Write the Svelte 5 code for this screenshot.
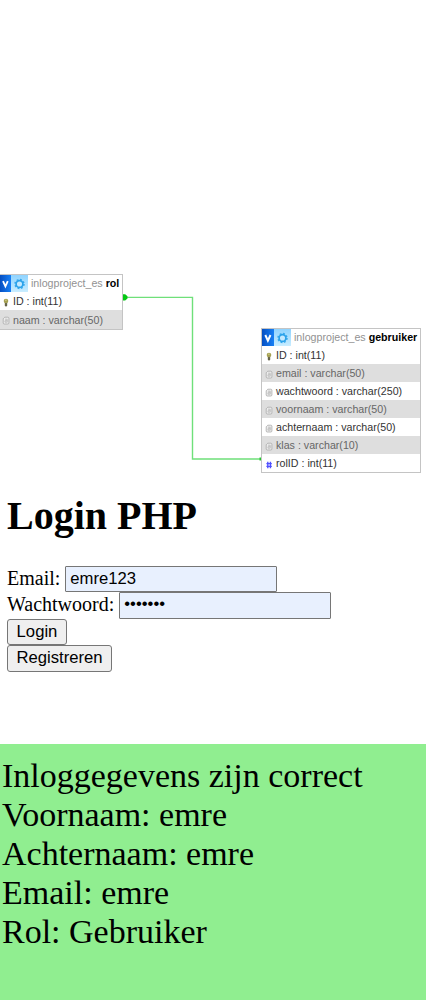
<script>
  const tables = [
    { name: 'rol', cls: 'role', columns: [['key', 'ID : int(11)'], ['text', 'naam : varchar(50)']] },
    {
      name: 'gebruiker', cls: 'user', columns: [
        ['key', 'ID : int(11)'],
        ['text', 'email : varchar(50)'],
        ['text', 'wachtwoord : varchar(250)'],
        ['text', 'voornaam : varchar(50)'],
        ['text', 'achternaam : varchar(50)'],
        ['text', 'klas : varchar(10)'],
        ['num', 'rolID : int(11)']
      ]
    }
  ];
  let email = $state('emre123');
  let password = $state('welkom1');
  const result = ['Inloggegevens zijn correct', 'Voornaam: emre', 'Achternaam: emre', 'Email: emre', 'Rol: Gebruiker'];
</script>

<main>
  <section class="diagram">
    <svg class="relation" width="426" height="486" viewBox="0 0 426 486">
      <path d="M124 297.4H192.5V459H262" fill="none" stroke="#6fe07a" stroke-width="1.4" />
      <path d="M123 294.2h2.2l2.3 2v2.4l-2.3 2H123z" fill="#05c814" />
      <path d="M259.5 459h3" stroke="#22c72d" stroke-width="3" />
    </svg>
    {#each tables as table}
      <div class="table {table.cls}">
        <div class="head">
          <span class="toggle">
            <svg width="12" height="17" viewBox="0 0 12 17"><path d="M3.3 6L5.9 11.6L8.5 6" fill="none" stroke="#fff" stroke-width="2" /></svg>
          </span>
          <span class="gear">
            <svg width="17" height="17" viewBox="0 0 17 17">
              <circle cx="8.5" cy="9" r="4.5" fill="none" stroke="#35a9ee" stroke-width="1.5" stroke-dasharray="1.8 1.734" />
              <circle cx="8.5" cy="9" r="3.4" fill="#c4e9ff" stroke="#2ba2ea" stroke-width="1.7" />
            </svg>
          </span>
          <span class="title">inlogproject_es <b>{table.name}</b></span>
        </div>
        {#each table.columns as [kind, label]}
          <div class="row">
            <svg width="8" height="9" viewBox="0 0 8 9">
              {#if kind === 'key'}
                <path d="M2.8 4.3h2.4v3.5l-1.2 1-1.2-1z" fill="#66644a" />
                <ellipse cx="4" cy="3" rx="2.3" ry="2.3" fill="#a5a052" />
                <path d="M3.3 2.2h1.2" stroke="#e8e4aa" />
              {:else if kind === 'text'}
                <path d="M2.8 1.2h3q1.1 0 1.1 1v4.7q0 1.1-1.1 1.1H2.3q-1.1 0-1.1-1.1V2.8z" fill="#ececec" stroke="#aaa" stroke-width=".8" />
                <path d="M3 3.2h2.2v3H3V4.7h2.2" fill="none" stroke="#b0b0b0" stroke-width=".7" />
              {:else}
                <path d="M2.8 1.8v6.4M5.4 1.8v6.4M1.4 3.6h5.4M1.4 6.4h5.4" stroke="#5050ff" stroke-width="1.4" />
              {/if}
            </svg>
            <span>{label}</span>
          </div>
        {/each}
      </div>
    {/each}
  </section>

  <section class="login">
    <h1>Login PHP</h1>
    <form onsubmit={(e) => e.preventDefault()}>
      <label>Email: <input type="text" bind:value={email} /></label>
      <label class="second">Wachtwoord: <input type="password" bind:value={password} /></label>
      <button>Login</button>
      <button class="register" type="button">Registreren</button>
    </form>
  </section>

  <section class="result">
    {#each result as line}<div>{line}</div>{/each}
  </section>
</main>

<style>
  :global(body) { margin: 0; background: #fff; }
  main { width: 426px; height: 1000px; overflow: hidden; display: flex; flex-direction: column; color: #000; font-family: "Liberation Serif", serif; }
  .diagram { position: relative; height: 486px; flex: none; font: 10.67px "Liberation Sans", sans-serif; }
  .relation { position: absolute; left: 0; top: 0; }
  .table { position: absolute; box-sizing: border-box; border: 1px solid #c4c4c4; background: #fff; }
  .role { left: -1px; top: 274px; width: 124px; height: 56px; }
  .user { left: 261px; top: 328px; width: 160px; height: 145px; }
  .head { display: flex; height: 17px; align-items: center; white-space: nowrap; }
  .toggle { display: flex; width: 12px; height: 17px; align-items: center; background: linear-gradient(90deg, #064fc2, #1780f5); }
  .role .toggle { width: 11px; }
  .gear { display: flex; width: 17px; height: 17px; align-items: center; background: linear-gradient(#8fd3ff, #c9edff); }
  .title { margin-left: 3px; color: #929292; line-height: 17px; }
  .title b { color: #000; }
  .row { display: flex; align-items: center; height: 18px; padding-left: 3px; gap: 3px; color: #333; white-space: nowrap; }
  .role .row { padding-left: 2px; }
  .row svg { flex: none; margin-top: 2px; }
  .row:nth-child(odd) { background: #dedede; color: #666; }
  .role .row:last-child { height: 19px; }
  .login { height: 258px; flex: none; padding-left: 7px; box-sizing: border-box; font-size: 20px; }
  h1 { margin: 7px 0 27px; font-size: 40px; line-height: 46px; }
  form { display: flex; flex-direction: column; align-items: flex-start; }
  label { display: flex; gap: 5px; height: 26px; line-height: 24px; }
  .second { height: 27px; }
  input { box-sizing: border-box; width: 212px; height: 26px; padding: 0 4px 1px; border: 1px solid #767676; border-radius: 1px; background: #e8f0fe; color: #000; font: 16.67px "Liberation Sans", sans-serif; outline: 0; }
  .second input { height: 27px; padding-bottom: 3px; }
  button { box-sizing: border-box; width: 60px; height: 26px; padding: 0 0 1px; border: 1px solid #767676; border-radius: 3px; background: #efefef; color: #000; font: 16.67px "Liberation Sans", sans-serif; }
  .register { width: 105px; height: 27px; padding-bottom: 2px; }
  .result { flex: 1; box-sizing: border-box; padding: 12px 2px; background: #90ee90; font-size: 34px; line-height: 39px; white-space: nowrap; }
</style>
